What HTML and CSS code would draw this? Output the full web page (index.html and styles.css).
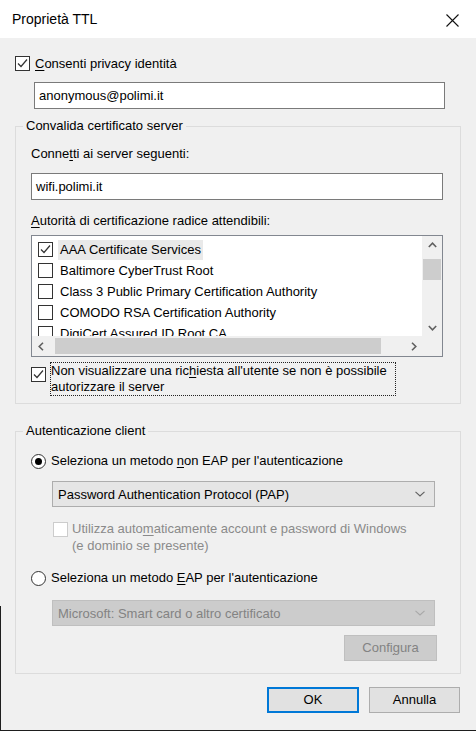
FILE: index.html
```html
<!DOCTYPE html>
<html lang="it">
<head>
    <meta charset="UTF-8">
    <title>Proprietà TTL</title>
    <link rel="stylesheet" href="styles.css">
</head>
<body>
    <div class="window">
        <div class="titlebar">
            <span class="title">Proprietà TTL</span>
            <svg class="close" width="13" height="13" viewBox="0 0 13 13">
                <path d="M0.5 0.5 L12.5 12.5 M12.5 0.5 L0.5 12.5" stroke="#111" stroke-width="1.1" fill="none"/>
            </svg>
        </div>
        <div class="content">
            <div class="check top-check">
                <span class="box"><svg viewBox="0 0 13 13"><polyline points="2,6.5 5,9.5 11,2.5" fill="none" stroke="#333" stroke-width="1.2"/></svg></span>
                <span class="check-label"><u>C</u>onsenti privacy identità</span>
            </div>
            <div class="textbox identity">anonymous@polimi.it</div>

            <fieldset class="group validate">
                <legend>Convalida certificato server</legend>
                <div class="group-body">
                    <div class="field-label">Conne<u>t</u>ti ai server seguenti:</div>
                    <div class="textbox server">wifi.polimi.it</div>
                    <div class="field-label ca-label"><u>A</u>utorità di certificazione radice attendibili:</div>
                    <div class="listbox">
                        <div class="list-body">
                            <div class="list-items">
                                <div class="row">
                                    <span class="box"><svg viewBox="0 0 13 13"><polyline points="2,6.5 5,9.5 11,2.5" fill="none" stroke="#333" stroke-width="1.2"/></svg></span>
                                    <span class="row-text selected">AAA Certificate Services</span>
                                </div>
                                <div class="row"><span class="box"></span><span class="row-text">Baltimore CyberTrust Root</span></div>
                                <div class="row"><span class="box"></span><span class="row-text">Class 3 Public Primary Certification Authority</span></div>
                                <div class="row"><span class="box"></span><span class="row-text">COMODO RSA Certification Authority</span></div>
                                <div class="row"><span class="box"></span><span class="row-text">DigiCert Assured ID Root CA</span></div>
                            </div>
                            <div class="vscroll">
                                <div class="arrow"><svg width="9" height="6" viewBox="0 0 9 6"><polyline points="0.8,5 4.5,1.2 8.2,5" fill="none" stroke="#606060" stroke-width="1.6"/></svg></div>
                                <div class="vthumb"></div>
                                <div class="arrow down"><svg width="9" height="6" viewBox="0 0 9 6"><polyline points="0.8,1 4.5,4.8 8.2,1" fill="none" stroke="#606060" stroke-width="1.6"/></svg></div>
                            </div>
                        </div>
                        <div class="hscroll">
                            <div class="arrow"><svg width="6" height="9" viewBox="0 0 6 9"><polyline points="5,0.8 1.2,4.5 5,8.2" fill="none" stroke="#606060" stroke-width="1.6"/></svg></div>
                            <div class="hthumb"></div>
                            <div class="arrow right"><svg width="6" height="9" viewBox="0 0 6 9"><polyline points="1,0.8 4.8,4.5 1,8.2" fill="none" stroke="#606060" stroke-width="1.6"/></svg></div>
                            <div class="corner"></div>
                        </div>
                    </div>
                    <div class="check prompt-check">
                        <span class="box"><svg viewBox="0 0 13 13"><polyline points="2,6.5 5,9.5 11,2.5" fill="none" stroke="#333" stroke-width="1.2"/></svg></span>
                        <span class="check-label focus">Non visualizzare una ric<u>h</u>iesta all'utente se non è possibile<br>autorizzare il server</span>
                    </div>
                </div>
            </fieldset>

            <fieldset class="group client">
                <legend>Autenticazione client</legend>
                <div class="group-body">
                    <div class="radio-row">
                        <span class="radio on"></span>
                        <span>Seleziona un metodo <u>n</u>on EAP per l'autenticazione</span>
                    </div>
                    <div class="combo">
                        <span>Password Authentication Protocol (PAP)</span>
                        <svg width="10" height="6" viewBox="0 0 10 6"><polyline points="0.5,0.8 5,5 9.5,0.8" fill="none" stroke="#606060" stroke-width="1.1"/></svg>
                    </div>
                    <div class="check disabled-check">
                        <span class="box off"></span>
                        <span class="check-label">Utilizza auto<u>m</u>aticamente account e password di Windows<br>(e dominio se presente)</span>
                    </div>
                    <div class="radio-row eap-row">
                        <span class="radio"></span>
                        <span>Seleziona un metodo <u>E</u>AP per l'autenticazione</span>
                    </div>
                    <div class="combo disabled">
                        <span>Microsoft: Smart card o altro certificato</span>
                        <svg width="10" height="6" viewBox="0 0 10 6"><polyline points="0.5,0.8 5,5 9.5,0.8" fill="none" stroke="#a8a8a8" stroke-width="1.1"/></svg>
                    </div>
                    <div class="btn disabled configure">Confi<u>g</u>ura</div>
                </div>
            </fieldset>

            <div class="actions">
                <div class="btn default">OK</div>
                <div class="btn">Annulla</div>
            </div>
        </div>
    </div>
</body>
</html>
```

FILE: styles.css
```css
html, body {
    margin: 0;
    padding: 0;
}
body {
    width: 476px;
    height: 731px;
    overflow: hidden;
    background: #f0f0f0;
    font-family: "Liberation Sans", Arial, sans-serif;
    font-size: 13px;
    color: #000;
}
u {
    text-decoration: underline;
    text-underline-offset: 2px;
}
.window {
    position: relative;
    height: 730px;
    border-bottom: 1px solid #1e1e1e;
    display: flex;
    flex-direction: column;
}
/* dark frame edge of the window behind, lower left */
.window::before {
    content: "";
    position: absolute;
    left: 0;
    top: 606px;
    bottom: 0;
    width: 1px;
    background: #1e1e1e;
}
.titlebar {
    height: 38px;
    flex: none;
    background: #fff;
    display: flex;
    align-items: center;
    justify-content: space-between;
    padding: 0 17px 0 12px;
}
.title {
    font-size: 14px;
    margin-top: -1px;
}
.close {
    margin-top: 3px;
}
.content {
    flex: 1;
    display: flex;
    flex-direction: column;
    padding: 0 15px;
}

/* checkboxes */
.check {
    display: flex;
    align-items: flex-start;
}
.box {
    flex: none;
    width: 13px;
    height: 13px;
    border: 1px solid #333;
    background: #fff;
}
.box svg {
    display: block;
    width: 13px;
    height: 13px;
}
.box.off {
    border-color: #cccccc;
}
.check-label {
    line-height: 15px;
    margin-left: 5px;
    white-space: nowrap;
}
.top-check {
    margin-top: 18px;
}

/* text boxes */
.textbox {
    height: 25px;
    line-height: 25px;
    border: 1px solid #7a7a7a;
    background: #fff;
    padding-left: 4px;
}
.identity {
    margin: 11px 16px 0 19px;
}

/* group boxes */
.group {
    margin: 0;
    padding: 0;
    min-width: 0;
    border: 1px solid #dcdcdc;
}
.group legend {
    padding: 0 3px;
    margin-left: 7px;
    line-height: 16px;
}
.group-body {
    display: flex;
    flex-direction: column;
    padding: 12px 17px 7px 15px;
}
.validate {
    margin-top: 9px;
}
.field-label {
    line-height: 16px;
}
.server {
    margin-top: 11px;
}
.ca-label {
    margin-top: 13px;
}

/* certificate list */
.listbox {
    margin-top: 6px;
    border: 1px solid #828790;
    background: #fff;
}
.list-body {
    display: flex;
    height: 100px;
}
.list-items {
    flex: 1;
    overflow: hidden;
    padding-top: 3px;
}
.row {
    height: 21px;
    display: flex;
    align-items: center;
    padding-left: 6px;
}
.row .box {
    margin-top: -1px;
}
.row-text {
    margin-left: 5px;
    padding: 0 2px;
    line-height: 20px;
    white-space: nowrap;
}
.row-text.selected {
    background: #e9e9e9;
}
.vscroll {
    width: 20px;
    flex: none;
    background: #f0f0f0;
    display: flex;
    flex-direction: column;
}
.arrow {
    flex: none;
    width: 20px;
    height: 17px;
    display: flex;
    align-items: center;
    justify-content: center;
}
.arrow.down {
    margin-top: auto;
}
.vthumb {
    margin: 6px 1px 0;
    height: 21px;
    background: #cdcdcd;
}
.hscroll {
    height: 20px;
    display: flex;
    align-items: center;
    background: #f0f0f0;
}
.hscroll .arrow {
    width: 17px;
    height: 20px;
}
.hthumb {
    margin-left: 6px;
    width: 326px;
    height: 16px;
    background: #cdcdcd;
}
.arrow.right {
    margin-left: auto;
}
.corner {
    width: 20px;
    height: 20px;
}
.prompt-check {
    margin-top: 5px;
}
.prompt-check .box {
    margin-top: 5px;
}
.check-label.focus {
    margin-left: 4px;
    width: 344px;
    line-height: 16px;
    border: 1px dotted #222;
}

/* client authentication */
.client {
    margin-top: 19px;
}
.client .group-body {
    padding-top: 14px;
    padding-bottom: 12px;
}
.radio-row {
    display: flex;
    align-items: center;
    line-height: 16px;
}
.radio {
    flex: none;
    width: 13px;
    height: 13px;
    border: 1px solid #333;
    border-radius: 50%;
    background: #fff;
    margin-right: 5px;
    display: flex;
    align-items: center;
    justify-content: center;
}
.radio.on::after {
    content: "";
    width: 7px;
    height: 7px;
    border-radius: 50%;
    background: #000;
}
.combo {
    height: 24px;
    margin: 12px 8px 0 21px;
    border: 1px solid #adadad;
    background: #e5e5e5;
    display: flex;
    align-items: center;
    justify-content: space-between;
    padding: 0 9px 0 5px;
}
.combo.disabled {
    background: #cccccc;
    border-color: #bfbfbf;
    color: #838383;
}
.disabled-check {
    margin: 13px 0 0 22px;
    color: #8a8a8a;
}
.disabled-check .box {
    margin-top: 2px;
}
.disabled-check .check-label {
    margin-left: 4px;
    line-height: 17px;
}
.eap-row {
    margin-top: 16px;
}
.eap-row + .combo {
    margin-top: 14px;
}

/* buttons */
.btn {
    width: 89px;
    height: 24px;
    line-height: 24px;
    text-align: center;
    border: 1px solid #adadad;
    background: #e1e1e1;
}
.btn.default {
    width: 88px;
    height: 22px;
    line-height: 22px;
    border: 2px solid #0078d7;
}
.btn.disabled {
    background: #cccccc;
    border-color: #bfbfbf;
    color: #838383;
}
.configure {
    align-self: flex-end;
    width: 91px;
    margin: 9px 6px 0 0;
}
.actions {
    display: flex;
    justify-content: flex-end;
    gap: 10px;
    margin: 13px 1px 0 0;
}
```
